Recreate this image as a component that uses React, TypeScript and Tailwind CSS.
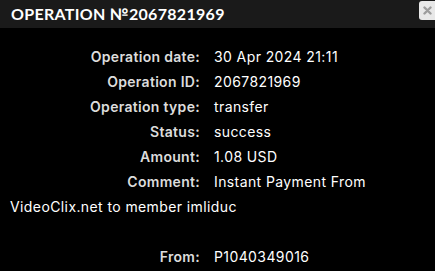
const rows = [
  { label: "Operation date:", value: "30 Apr 2024 21:11" },
  { label: "Operation ID:", value: "2067821969" },
  { label: "Operation type:", value: "transfer" },
  { label: "Status:", value: "success" },
  { label: "Amount:", value: "1.08 USD" },
  { label: "Comment:", value: "Instant Payment From VideoClix.net to member imliduc" },
];

export default function App() {
  return (
    <div className="w-[435px] h-[271px] bg-black overflow-hidden">
      <div className="h-[28px] bg-[#1a1a1a] flex items-start justify-between pl-[11px]">
        <h1 className="mt-[6px] text-white font-bold text-[16px] tracking-[0.3px] font-['Lato',sans-serif] leading-none">
          OPERATION №2067821969
        </h1>
        <button className="mt-[1px] w-[16px] h-[19px] bg-[#e8e8e8] rounded-l-[3px] flex items-center justify-center pl-[1px]">
          <svg width="9" height="9" viewBox="0 0 9 9">
            <path d="M1.5 1.5 L7.5 7.5 M7.5 1.5 L1.5 7.5" stroke="#9c9c9c" strokeWidth="2.4" strokeLinecap="round" />
          </svg>
        </button>
      </div>
      <div className="pt-[16px] pl-[10px] pr-[30px] text-[14px] leading-[25px] font-['Inter',sans-serif]">
        {rows.map((r) => (
          <div key={r.label}>
            <span className="inline-block w-[190px] text-right text-[#dcdcdc] font-semibold tracking-[0.3px]">{r.label}</span>
            <span className="ml-[14px] text-white tracking-[0.4px]">{r.value}</span>
          </div>
        ))}
        <div className="h-[25px]" />
        <div>
          <span className="inline-block w-[190px] text-right text-[#dcdcdc] font-semibold tracking-[0.3px]">From:</span>
          <span className="ml-[14px] text-white tracking-[0.4px]">P1040349016</span>
        </div>
      </div>
    </div>
  );
}
